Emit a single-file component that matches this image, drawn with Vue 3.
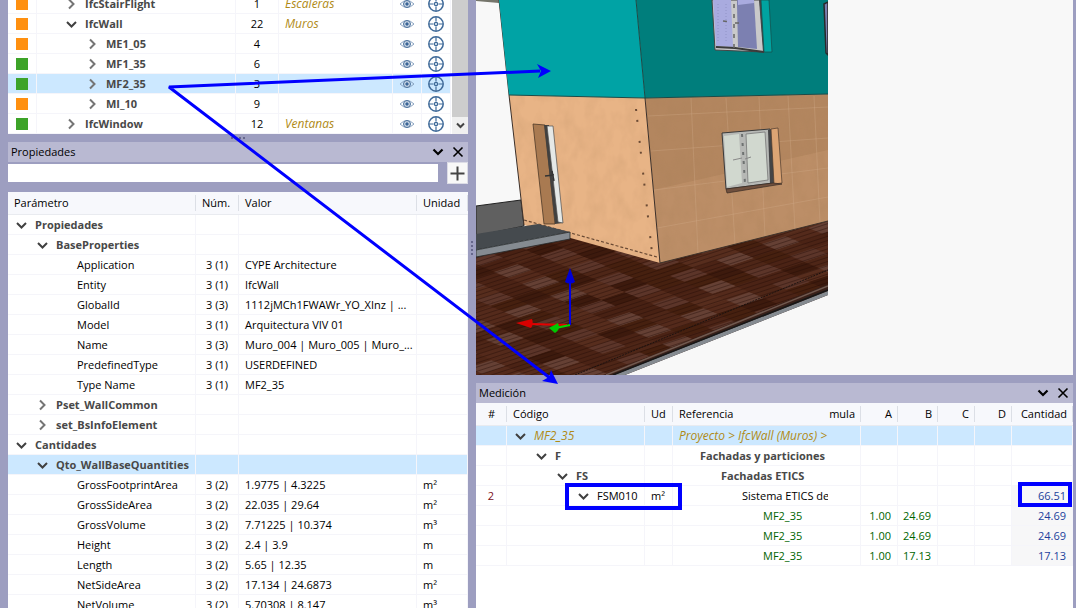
<script setup>
const elements = [
  { name: 'IfcStairFlight', level: 0, open: false, color: 'orange', count: 1, type: 'Escaleras' },
  { name: 'IfcWall', level: 0, open: true, color: 'orange', count: 22, type: 'Muros' },
  { name: 'ME1_05', level: 1, open: false, color: 'orange', count: 4, type: '' },
  { name: 'MF1_35', level: 1, open: false, color: 'green', count: 6, type: '' },
  { name: 'MF2_35', level: 1, open: false, color: 'green', count: 3, type: '', selected: true },
  { name: 'MI_10', level: 1, open: false, color: 'orange', count: 9, type: '' },
  { name: 'IfcWindow', level: 0, open: false, color: 'green', count: 12, type: 'Ventanas' },
]

const properties = [
  { name: 'Propiedades', level: 0, group: true, open: true },
  { name: 'BaseProperties', level: 1, group: true, open: true },
  { name: 'Application', level: 2, num: '3 (1)', value: 'CYPE Architecture' },
  { name: 'Entity', level: 2, num: '3 (1)', value: 'IfcWall' },
  { name: 'GlobalId', level: 2, num: '3 (3)', value: '1112jMCh1FWAWr_YO_XInz | ...' },
  { name: 'Model', level: 2, num: '3 (1)', value: 'Arquitectura VIV 01' },
  { name: 'Name', level: 2, num: '3 (3)', value: 'Muro_004 | Muro_005 | Muro_...' },
  { name: 'PredefinedType', level: 2, num: '3 (1)', value: 'USERDEFINED' },
  { name: 'Type Name', level: 2, num: '3 (1)', value: 'MF2_35' },
  { name: 'Pset_WallCommon', level: 1, group: true, open: false },
  { name: 'set_BsInfoElement', level: 1, group: true, open: false },
  { name: 'Cantidades', level: 0, group: true, open: true },
  { name: 'Qto_WallBaseQuantities', level: 1, group: true, open: true, selected: true },
  { name: 'GrossFootprintArea', level: 2, num: '3 (2)', value: '1.9775 | 4.3225', unit: 'm²' },
  { name: 'GrossSideArea', level: 2, num: '3 (2)', value: '22.035 | 29.64', unit: 'm²' },
  { name: 'GrossVolume', level: 2, num: '3 (2)', value: '7.71225 | 10.374', unit: 'm³' },
  { name: 'Height', level: 2, num: '3 (2)', value: '2.4 | 3.9', unit: 'm' },
  { name: 'Length', level: 2, num: '3 (2)', value: '5.65 | 12.35', unit: 'm' },
  { name: 'NetSideArea', level: 2, num: '3 (2)', value: '17.134 | 24.6873', unit: 'm²' },
  { name: 'NetVolume', level: 2, num: '3 (2)', value: '5.70308 | 8.147', unit: 'm³' },
]

const measures = [
  { code: 'MF2_35', level: 0, ref: 'Proyecto > IfcWall (Muros) >', kind: 'path' },
  { code: 'F', level: 1, ref: 'Fachadas y particiones', kind: 'chapter' },
  { code: 'FS', level: 2, ref: 'Fachadas ETICS', kind: 'chapter' },
  { n: 2, code: 'FSM010', level: 3, unit: 'm²', ref: 'Sistema ETICS de', total: '66.51', kind: 'item' },
  { level: 4, ref: 'MF2_35', a: '1.00', b: '24.69', total: '24.69', kind: 'line' },
  { level: 4, ref: 'MF2_35', a: '1.00', b: '24.69', total: '24.69', kind: 'line' },
  { level: 4, ref: 'MF2_35', a: '1.00', b: '17.13', total: '17.13', kind: 'line' },
]

const indent = (base, level) => ({ paddingLeft: base + 21 * level + 'px' })

// Decking: parallelogram tiles laid on a sheared grid
const shades = ['#4e2617', '#46200f', '#542a1b', '#3d1a0d', '#4b2315', '#572d1d', '#482113']
const tiles = []
for (let i = -6; i < 18; i++) {
  for (let j = -14; j < 28; j++) {
    const x = 476 + i * 23 + j * 14
    const y = 300 - i * 8 + j * 6
    if (x < 430 || x > 840 || y < 205 || y > 390) continue
    const noise = Math.sin(i * 12.99 + j * 78.23) * 43758.5
    const h = Math.floor((noise - Math.floor(noise)) * 7)
    const light = i % 2 === 0 && j % 2 === 0
    tiles.push({ d: `M${x} ${y}l24 -8l15 6l-24 8z`, fill: light ? (h > 2 ? '#654034' : '#5c3529') : shades[h] })
  }
}
const brickJoints = [
  'M691 98L698 254', 'M726 98L735 244', 'M759 97L765 237', 'M788 96L795 230', 'M814 96L820 223',
  'M648 116L828 107', 'M651 151L828 138', 'M654 190L828 168', 'M657 228L828 197',
]
</script>

<template>
  <main class="app">
    <section class="left">
      <div class="tree">
        <table class="grid tree-table">
          <colgroup><col class="w29"><col><col class="w43"><col class="w114"><col class="w29"><col class="w29"></colgroup>
          <tbody>
            <tr v-for="e in elements" :key="e.name" :class="{ selected: e.selected }">
              <td class="center"><span class="swatch" :class="e.color"></span></td>
              <td :style="indent(27, e.level)">
                <span class="node bold">
                  <svg class="chev" :class="{ closed: !e.open }" viewBox="0 0 15 12"><path :d="e.open ? 'M3 4l4.500 4.500L12 4' : 'M5 1.500L9.500 6L5 10.500'" /></svg>{{ e.name }}
                </span>
              </td>
              <td class="center">{{ e.count }}</td>
              <td class="italic">{{ e.type }}</td>
              <td class="center">
                <button class="icon" aria-label="Ver">
                  <svg width="16" height="12" viewBox="0 0 16 12" fill="none" stroke="#8aa4c1">
                    <path d="M1 6Q8 -1 15 6Q8 13 1 6z" />
                    <circle cx="8" cy="6" r="3.500" fill="#c8d5e3" stroke="#4a719d" /><circle cx="8" cy="6" r="1.200" fill="#3a6597" stroke="#3a6597" />
                  </svg>
                </button>
              </td>
              <td class="center">
                <button class="icon" aria-label="Centrar">
                  <svg width="16" height="16" viewBox="0 0 16 16" fill="none" stroke="#3f6a99">
                    <circle cx="8" cy="8" r="7.200" stroke-width="1.500" /><circle cx="8" cy="8" r="1.600" stroke-width="1.300" />
                    <path d="M8 1v4.500M8 10.500V15M1 8h4.500M10.500 8H15" stroke-width="1.200" />
                  </svg>
                </button>
              </td>
            </tr>
          </tbody>
        </table>
        <div class="scroll">
          <div class="thumb"></div>
          <button class="scroll-btn" aria-label="Bajar"><svg width="9" height="7" viewBox="0 0 9 7"><path d="M1 1.500L4.500 5L8 1.500" fill="none" stroke="#444" stroke-width="2" /></svg></button>
        </div>
      </div>
      <div class="split-h"><i></i><i></i><i></i><i></i></div>
      <header class="title">
        <h2>Propiedades</h2>
        <button aria-label="Contraer"><svg viewBox="0 0 12 12"><path d="M1.500 3.500L6 8l4.500-4.500" stroke-width="2.200" /></svg></button>
        <button aria-label="Cerrar"><svg viewBox="0 0 12 12"><path d="M1.500 1.500l9 9M10.500 1.500l-9 9" stroke-width="1.600" /></svg></button>
      </header>
      <div class="search">
        <input type="text" aria-label="Buscar">
        <button aria-label="Añadir"><svg width="15" height="15" viewBox="0 0 15 15"><path d="M7.500 0.500v14M0.500 7.500h14" stroke="#444" stroke-width="2" /></svg></button>
      </div>
      <div class="props">
        <table class="grid">
          <colgroup><col><col class="w43"><col class="w178"><col class="w51"></colgroup>
          <thead><tr><th class="pad6">Parámetro</th><th>Núm.</th><th>Valor</th><th>Unidad</th></tr></thead>
          <tbody>
            <tr v-for="p in properties" :key="p.name" :class="{ selected: p.selected }">
              <td :style="indent(6, p.level)">
                <span class="node" :class="{ bold: p.group }">
                  <svg class="chev" :class="{ closed: !p.open }" viewBox="0 0 15 12"><path v-if="p.group" :d="p.open ? 'M3 4l4.500 4.500L12 4' : 'M5 1.500L9.500 6L5 10.500'" /></svg>{{ p.name }}
                </span>
              </td>
              <td class="center">{{ p.num }}</td>
              <td>{{ p.value }}</td>
              <td>{{ p.unit }}</td>
            </tr>
          </tbody>
        </table>
      </div>
    </section>

    <div class="split-v"><i></i><i></i><i></i><i></i></div>

    <section class="right">
      <div class="view">
        <svg class="scene" viewBox="476 0 352 375" preserveAspectRatio="xMinYMin slice" role="img" aria-label="Modelo 3D">
          <defs>
            <filter id="plaster" x="0" y="0" width="100%" height="100%">
              <feTurbulence type="fractalNoise" baseFrequency="0.080 0.050" numOctaves="3" seed="4" />
              <feColorMatrix values="0 0 0 0 .4  0 0 0 0 .22  0 0 0 0 .1  .9 0 0 0 -.33" />
              <feComposite in2="SourceGraphic" operator="in" />
            </filter>
            <pattern id="planks" width="24" height="4" patternUnits="userSpaceOnUse" patternTransform="rotate(-18)">
              <path d="M0 .500H24" stroke="#200b05" stroke-opacity=".4" stroke-width="1" />
            </pattern>
            <clipPath id="deck"><path d="M476 254L570 232L660 258L828 218V290L613 375H476z" /></clipPath>
          </defs>
          <rect x="476" y="0" width="352" height="375" fill="#f8f8f8" />
          <path d="M476 0H499V3L476 1z" fill="#75756b" />
          <path d="M476 206L521 200L524 226L476 236z" fill="#606060" stroke="#222" stroke-width="1" />
          <g clip-path="url(#deck)">
            <rect x="476" y="200" width="352" height="175" fill="#42200f" />
            <path v-for="(t, i) in tiles" :key="i" :d="t.d" :fill="t.fill" />
            <rect x="476" y="200" width="352" height="175" fill="url(#planks)" />
            <path d="M575 375L828 270" stroke="#1c1210" stroke-dasharray="2 1" fill="none" />
          </g>
          <path d="M828 284V295L625 375H603z" fill="#39211a" />
          <path d="M606 375L828 286" stroke="#71594f" stroke-width="1.500" />
          <path d="M828 291V295L625 375H614z" fill="#858b91" />
          <path d="M613 375L828 290" stroke="#171717" stroke-width="1.500" />

          <path d="M509 95L645 98L660 263L524 225z" fill="#e8b486" />
          <path d="M645 98L828 94V221L660 263z" fill="#b3865f" />
          <path d="M653 190L828 150V221L660 263z" fill="#c79970" opacity=".45" />
          <path d="M509 95L645 98L660 263L524 225z" filter="url(#plaster)" opacity=".35" />
          <path d="M645 98L828 94V221L660 263z" filter="url(#plaster)" opacity=".6" />
          <path v-for="d in brickJoints" :key="d" :d="d" stroke="#d4b190" stroke-opacity=".3" fill="none" />
          <path d="M636 109L652 253" stroke="#6a4a34" stroke-width="2" stroke-dasharray="2 9 2 19" fill="none" />
          <path d="M524 220L657 257" stroke="#6a4a34" stroke-width="1.200" stroke-dasharray="3 2" fill="none" />
          <path d="M476 234L538 224L570 232L476 250z" fill="#454a4e" />
          <path d="M476 250L570 232V239L476 257z" fill="#858b91" stroke="#24282a" stroke-width=".800" />
          <path d="M499 0L509 95L524 225M645 98L660 263L828 221" fill="none" stroke="#3c302a" stroke-width="1" />

          <path d="M499 0H636L645 98L509 95z" fill="#00a3a5" />
          <path d="M636 0H828V94L645 98z" fill="#007e7c" />
          <path d="M509 95L645 98L828 94M636 0L645 98" fill="none" stroke="#1d4a46" stroke-width="1" />

          <path d="M533 124L545 125L555 224L544 224z" fill="#a97a51" stroke="#4d3827" stroke-width=".800" />
          <path d="M544 125H549L563 223L555 224z" fill="#41403f" />
          <path d="M547 126L553 126L563 223L558 222z" fill="#e5e8e6" stroke="#4d4d4d" stroke-width=".700" />
          <path d="M545 176L554 175M552 171L554 181" stroke="#333" stroke-width="1.500" fill="none" />

          <path d="M712 0L715 50L764 52L760 0z" fill="#c9c9ca" stroke="#454545" stroke-width="1" />
          <path d="M713 0L716 46L733 47L731 0z" fill="#a9abdf" />
          <path d="M737 4L738 47L757 49L754 0H737z" fill="#7c80b1" />
          <path d="M738 0H754V3L738 5z" fill="#a9abdf" />
          <path d="M759 0L763 52L768 52L764 0z" fill="#47484a" />
          <path d="M761 0H769L772 52L764 52z" fill="#00a3a0" stroke="#174c49" stroke-width=".700" />
          <path d="M716 47L735 48L764 52" stroke="#3b3b3b" stroke-width="2" fill="none" />
          <path d="M734 4V48M723 21L732 22M735 23H741" stroke="#666" stroke-width="1.500" stroke-dasharray="4 6" fill="none" />
          <path d="M718 4V42M726 4V43" stroke="#9093c6" stroke-width="1" stroke-dasharray="1 2" />
          <path d="M824 4L828 2V55L826 53z" fill="#7a7eaf" stroke="#292929" stroke-width="1.500" />

          <path d="M722 133L770 129L773 183L726 189z" fill="#b6b8b5" stroke="#393939" stroke-width="1" />
          <path d="M724 136L739 134L742 183L727 187z" fill="#d1d8cf" />
          <path d="M746 134L765 132L768 180L748 183z" fill="#d1d8cf" stroke="#777" stroke-width=".800" />
          <path d="M768 130L772 129L775 183L770 184z" fill="#444446" />
          <path d="M771 129L778 128L782 183L774 184z" fill="#dca474" stroke="#4c392d" stroke-width=".700" />
          <path d="M726 189L773 183L782 184L727 193z" fill="#70503e" stroke="#3a2c25" stroke-width=".700" />
          <path d="M742 134L745 184" stroke="#6e7271" stroke-width="2" stroke-dasharray="3 6" />
          <path d="M733 160L742 158M745 159L751 157" stroke="#888" stroke-width="1" />

          <path d="M570 325V282" stroke="#0000e6" stroke-width="2" />
          <path d="M570 268L575 282Q570 285 565 282z" fill="#0000d5" />
          <path d="M567 325L530 324" stroke="#e60000" stroke-width="2" />
          <path d="M516 323L532 319Q534 324 531 328z" fill="#d90000" />
          <path d="M570 325L556 328" stroke="#00d900" stroke-width="2" />
          <path d="M549 328L558 323Q561 329 555 333z" fill="#00c800" />
        </svg>
      </div>
      <div class="gap"></div>
      <header class="title">
        <h2>Medición</h2>
        <button aria-label="Contraer"><svg viewBox="0 0 12 12"><path d="M1.500 3.500L6 8l4.500-4.500" stroke-width="2.200" /></svg></button>
        <button aria-label="Cerrar"><svg viewBox="0 0 12 12"><path d="M1.500 1.500l9 9M10.500 1.500l-9 9" stroke-width="1.600" /></svg></button>
      </header>
      <div class="measure">
        <table class="grid">
          <colgroup><col class="w31"><col class="w138"><col class="w28"><col><col class="w33"><col class="w37"><col class="w40"><col class="w37"><col class="w37"><col class="w61"></colgroup>
          <thead>
            <tr><th class="center">#</th><th class="pad6">Código</th><th class="pad6">Ud</th><th class="nosep pad6">Referencia</th><th class="num">mula</th><th class="num">A</th><th class="num">B</th><th class="num">C</th><th class="num">D</th><th class="num">Cantidad</th></tr>
          </thead>
          <tbody>
            <tr v-for="(m, i) in measures" :key="i" :class="[m.kind, { selected: i === 0 }]">
              <td class="center index">{{ m.n }}</td>
              <td :style="indent(6, m.level)">
                <span v-if="m.code" class="node"><svg class="chev" viewBox="0 0 15 12"><path d="M3 4l4.500 4.500L12 4" /></svg>{{ m.code }}</span>
              </td>
              <td>{{ m.unit }}</td>
              <td class="nosep" :style="indent(6, m.level)">{{ m.ref }}</td>
              <td></td>
              <td class="num">{{ m.a }}</td>
              <td class="num">{{ m.b }}</td>
              <td></td>
              <td></td>
              <td class="num" :class="{ total: m.total }">{{ m.total }}</td>
            </tr>
          </tbody>
        </table>
      </div>
    </section>

    <svg class="notes" fill="none" stroke="#0000ff" aria-hidden="true">
      <path d="M540 71L169 87L550 378" stroke-width="3" stroke-linejoin="bevel" />
      <path d="M551 71L537 64L541 71L538 78z" fill="#0000ff" stroke="none" />
      <path d="M558 384L551 370L549 377L542 381z" fill="#0000ff" stroke="none" />
      <rect x="567" y="485" width="113" height="23" stroke-width="4" />
      <rect x="1020" y="484" width="50" height="21" stroke-width="4" />
    </svg>
  </main>
</template>

<style>
body { margin: 0; }
</style>

<style scoped>
.app {
  position: relative;
  display: grid;
  grid-template-columns: 460px 8px minmax(0, 1fr);
  height: 100vh;
  padding: 0 3px 0 8px;
  box-sizing: border-box;
  overflow: hidden;
  background: #9d9ec0;
  color: #000;
  font-family: "Open Sans", "Noto Sans", sans-serif;
  font-size: 11px;
  line-height: 16px;
}
button { border: 0; padding: 0; background: none; display: flex; align-items: center; justify-content: center; }
.left { display: flex; flex-direction: column; min-height: 0; }
.right { display: grid; grid-template-rows: minmax(0, 1fr) 8px 20px 205px; min-height: 0; }
.tree { display: flex; align-items: flex-end; height: 134px; overflow: hidden; background: #fff; flex: none; }
.tree .tree-table { flex: 1; width: auto; min-width: 0; max-width: 443px; }
.scroll { align-self: stretch; width: 16px; margin-left: 1px; display: flex; flex-direction: column; background: #f0f0f0; }
.thumb { flex: 1; background: #cdcdcd; }
.scroll-btn { height: 17px; background: #f0f0f0; }

.grid { table-layout: fixed; width: 100%; border-collapse: separate; border-spacing: 0; background: #fff; }
.grid td, .grid th {
  box-sizing: border-box;
  height: 20px;
  padding: 0 0 0 6px;
  overflow: hidden;
  white-space: nowrap;
  text-align: left;
  font-weight: 400;
  vertical-align: middle;
  border-right: 1px solid #f5f5fa;
  border-bottom: 1px solid #f5f5fa;
}
.grid td { line-height: 19px; }
.grid th {
  height: 23px;
  border-right: 0;
  border-bottom-color: #e9ebf0;
  background: linear-gradient(#dcdfe6, #dcdfe6) right 3px / 1px 16px no-repeat #f7f8fc;
}
.grid .nosep { border-right: 0; background-image: none; }
.grid .center { text-align: center; padding: 0; }
.grid .num { text-align: right; padding: 0 6px 0 0; }
.grid .pad6 { padding-left: 6px; }
.grid .selected td { background: #cce8ff; }
.w28 { width: 28px; } .w29 { width: 29px; } .w31 { width: 31px; } .w33 { width: 33px; } .w37 { width: 37px; }
.w40 { width: 40px; } .w43 { width: 43px; } .w51 { width: 51px; } .w61 { width: 61px; }
.w114 { width: 114px; } .w138 { width: 138px; } .w178 { width: 178px; }

.node { display: flex; align-items: center; gap: 6px; height: 19px; }
.grid .bold, .grid .chapter .node, .grid .chapter .nosep { font-weight: 700; color: #484848; }
.chev { width: 15px; height: 12px; flex: none; fill: none; stroke: #404040; stroke-width: 2; }
.chev.closed { stroke: #757575; }
.grid .italic, .grid .path .node, .grid .path .nosep { font-size: 12px; font-style: italic; color: #b08a16; }
.line td { color: #006400; }
.index { color: #7a1020; }
.grid .total { color: #1c3f9c; background: #f7f7f8; }
.swatch { display: block; width: 12px; height: 12px; margin: 0 auto; }
.orange { background: #ff9010; }
.green { background: #3da328; }
.icon { width: 100%; height: 19px; }

.split-h { height: 8px; flex: none; display: flex; justify-content: center; align-items: center; gap: 2px; }
.split-v { display: flex; flex-direction: column; justify-content: center; align-items: center; gap: 2px; padding-bottom: 112px; }
.split-h i, .split-v i { width: 2px; height: 2px; background: #66678c; }
.title { display: flex; align-items: center; gap: 8px; height: 20px; flex: none; padding: 0 4px 0 3px; background: #b9b9d2; }
.title h2 { flex: 1; margin: 0; font-size: 11px; font-weight: 400; }
.title svg { width: 12px; height: 12px; fill: none; stroke: #000; }
.search { display: flex; align-items: center; gap: 9px; height: 22px; flex: none; margin-bottom: 8px; }
.search input { flex: 1; min-width: 0; height: 18px; box-sizing: border-box; border: 0; padding: 0 4px; background: #fff; font: inherit; outline: 0; }
.search button { width: 21px; height: 22px; background: #f8f8f8; border: 1px solid #dcdce6; }
.props { flex: 1; min-height: 0; overflow: hidden; background: #fff; }
.view { overflow: hidden; background: #f8f8f8; }
.scene { display: block; width: 352px; height: 100%; }
.measure { overflow: hidden; background: #fff; }
.notes { position: absolute; inset: 0; width: 100%; height: 100%; pointer-events: none; }
</style>
